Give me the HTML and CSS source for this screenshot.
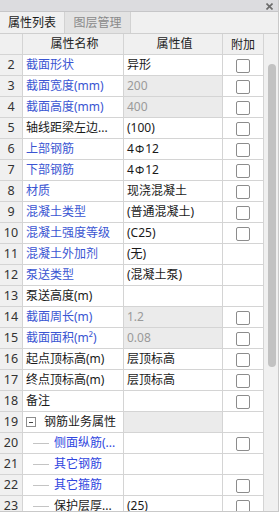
FILE: index.html
```html
<!DOCTYPE html>
<html lang="zh">
<head>
<meta charset="utf-8">
<link rel="stylesheet" href="styles.css">
</head>
<body>
<div class="panel">
  <div class="titlebar">
    <svg class="close" width="7" height="7" viewBox="0 0 7 7"><path d="M0.5 0.5L6.5 6.5M6.5 0.5L0.5 6.5" stroke="#6a6a6a" stroke-width="1.6"/></svg>
  </div>
  <div class="tabs">
    <div class="tab active">属性列表</div>
    <div class="tab">图层管理</div>
  </div>
  <div class="body">
    <div class="grid">
      <div class="row head"><div class="c n"></div><div class="c name ctr">属性名称</div><div class="c val ctr">属性值</div><div class="c att ctr">附加</div></div>
      <div class="row"><div class="c n">2</div><div class="c name blue">截面形状</div><div class="c val">异形</div><div class="c att"><span class="cb"></span></div></div>
      <div class="row"><div class="c n">3</div><div class="c name blue">截面宽度(mm)</div><div class="c val dis">200</div><div class="c att"><span class="cb"></span></div></div>
      <div class="row"><div class="c n">4</div><div class="c name blue">截面高度(mm)</div><div class="c val dis">400</div><div class="c att"><span class="cb"></span></div></div>
      <div class="row"><div class="c n">5</div><div class="c name">轴线距梁左边...</div><div class="c val">(100)</div><div class="c att"><span class="cb"></span></div></div>
      <div class="row"><div class="c n">6</div><div class="c name blue">上部钢筋</div><div class="c val">4<span class="bar">Φ</span>12</div><div class="c att"><span class="cb"></span></div></div>
      <div class="row"><div class="c n">7</div><div class="c name blue">下部钢筋</div><div class="c val">4<span class="bar">Φ</span>12</div><div class="c att"><span class="cb"></span></div></div>
      <div class="row"><div class="c n">8</div><div class="c name blue">材质</div><div class="c val">现浇混凝土</div><div class="c att"><span class="cb"></span></div></div>
      <div class="row"><div class="c n">9</div><div class="c name blue">混凝土类型</div><div class="c val">(普通混凝土)</div><div class="c att"><span class="cb"></span></div></div>
      <div class="row"><div class="c n">10</div><div class="c name blue">混凝土强度等级</div><div class="c val">(C25)</div><div class="c att"><span class="cb"></span></div></div>
      <div class="row"><div class="c n">11</div><div class="c name blue">混凝土外加剂</div><div class="c val">(无)</div><div class="c att"></div></div>
      <div class="row"><div class="c n">12</div><div class="c name blue">泵送类型</div><div class="c val">(混凝土泵)</div><div class="c att"></div></div>
      <div class="row"><div class="c n">13</div><div class="c name">泵送高度(m)</div><div class="c val"></div><div class="c att"></div></div>
      <div class="row"><div class="c n">14</div><div class="c name blue">截面周长(m)</div><div class="c val dis">1.2</div><div class="c att"><span class="cb"></span></div></div>
      <div class="row"><div class="c n">15</div><div class="c name blue">截面面积(m²)</div><div class="c val dis">0.08</div><div class="c att"><span class="cb"></span></div></div>
      <div class="row"><div class="c n">16</div><div class="c name">起点顶标高(m)</div><div class="c val">层顶标高</div><div class="c att"><span class="cb"></span></div></div>
      <div class="row"><div class="c n">17</div><div class="c name">终点顶标高(m)</div><div class="c val">层顶标高</div><div class="c att"><span class="cb"></span></div></div>
      <div class="row"><div class="c n">18</div><div class="c name">备注</div><div class="c val"></div><div class="c att"><span class="cb"></span></div></div>
      <div class="row"><div class="c n">19</div><div class="c name group"><span class="minus"></span>钢筋业务属性</div><div class="c val dis"></div><div class="c att"></div></div>
      <div class="row"><div class="c n">20</div><div class="c name sub blue"><span class="dash"></span>侧面纵筋(...</div><div class="c val"></div><div class="c att"><span class="cb"></span></div></div>
      <div class="row"><div class="c n">21</div><div class="c name sub blue"><span class="dash"></span>其它钢筋</div><div class="c val"></div><div class="c att"></div></div>
      <div class="row"><div class="c n">22</div><div class="c name sub blue"><span class="dash"></span>其它箍筋</div><div class="c val"></div><div class="c att"><span class="cb"></span></div></div>
      <div class="row"><div class="c n">23</div><div class="c name sub"><span class="dash"></span>保护层厚...</div><div class="c val">(25)</div><div class="c att"><span class="cb"></span></div></div>
    </div>
    <div class="scroll"><div class="thumb"></div></div>
  </div>
</div>
</body>
</html>
```
FILE: styles.css
```css
* { box-sizing: border-box; }
html, body { margin: 0; padding: 0; background: #ffffff; }
body {
  width: 280px;
  height: 513px;
  overflow: hidden;
  font-family: "Noto Sans", "Noto Sans CJK SC", sans-serif;
  font-size: 12px;
  color: #1a1a1a;
}
.panel {
  width: 279px;
  height: 512px;
  border-right: 1px solid #c9c9c9;
  border-bottom: 1px solid #c9c9c9;
  display: flex;
  flex-direction: column;
  background: #f0f0f0;
  overflow: hidden;
}
.titlebar {
  height: 12px;
  flex: none;
  background: #dcdcdf;
  border-bottom: 1px solid #c6c6c8;
  display: flex;
  justify-content: flex-end;
  align-items: center;
  padding-right: 5px;
}
.close { display: block; margin-top: 1px; }
.tabs {
  height: 22px;
  flex: none;
  display: flex;
  align-items: stretch;
  background: #f0f0f0;
  border-bottom: 1px solid #cfcfcf;
}
.tab {
  line-height: 21px;
  text-align: center;
  font-size: 12px;
}
.tab.active {
  width: 65px;
  color: #1a1a1a;
  background: #f0f0f0;
  border-right: 1px solid #d2d2d2;
}
.tab:not(.active) {
  width: 66px;
  color: #8a8a8a;
  background: #e3e3e3;
  border-right: 1px solid #d2d2d2;
}
.body {
  flex: 1;
  display: flex;
  min-height: 0;
}
.grid {
  width: 264px;
  flex: none;
  display: flex;
  flex-direction: column;
}
.row {
  display: grid;
  grid-template-columns: 23px 101px 99px 41px;
  height: 21px;
  flex: none;
}
.c {
  border-right: 1px solid #d4d4d4;
  border-bottom: 1px solid #d4d4d4;
  background: #ffffff;
  line-height: 20px;
  white-space: nowrap;
  overflow: hidden;
}
.c.n {
  background: #f0f0f0;
  text-align: center;
  color: #333333;
  font-size: 12.5px;
}
.head .c { background: #f0f0f0; color: #222222; }
.ctr { text-align: center; }
.name { padding-left: 3px; }
.val { padding-left: 3px; }
.blue { color: #3a55d2; }
.dis { background: #ebebeb; color: #9a9a9a; }
.att {
  display: flex;
  align-items: center;
  justify-content: center;
  padding-top: 1px;
}
.cb {
  display: block;
  width: 14px;
  height: 14px;
  border: 1px solid #8c8c8c;
  border-radius: 2px;
  background: #ffffff;
}
.bar { font-size: 11px; margin: 0 1px; }
.group { display: flex; align-items: center; }
.minus {
  width: 10px;
  height: 10px;
  border: 1px solid #8c8c8c;
  background: #ffffff;
  margin: 0 8px 0 0;
  position: relative;
  flex: none;
}
.minus::after {
  content: "";
  position: absolute;
  left: 2px;
  top: 4px;
  width: 4px;
  height: 1px;
  background: #444444;
}
.sub { display: flex; align-items: center; padding-left: 10px; }
.sub.blue { color: #2f45e0; }
.dash {
  width: 16px;
  height: 1px;
  background: #c4c4c4;
  margin-right: 5px;
  flex: none;
}
.scroll {
  width: 14px;
  flex: none;
  background: #f0f0f0;
  padding: 30px 1px 0 4px;
}
.thumb {
  width: 8px;
  height: 303px;
  border-radius: 4px;
  background: #c2c2c2;
}
```
